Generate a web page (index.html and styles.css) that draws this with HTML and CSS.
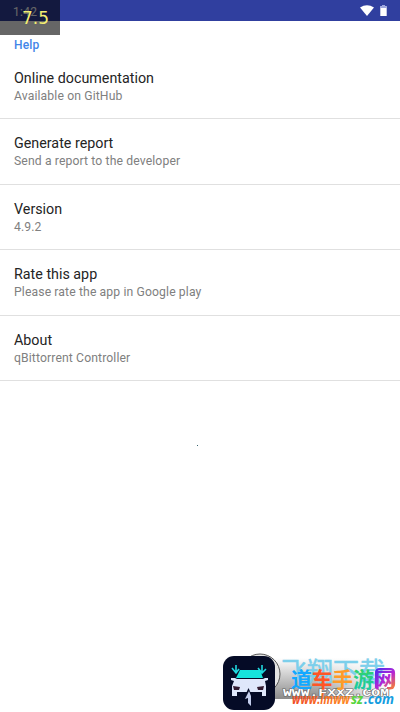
FILE: index.html
```html
<!DOCTYPE html>
<html lang="en">
<head>
<meta charset="utf-8">
<title>Help</title>
<link rel="stylesheet" href="styles.css">
</head>
<body>
<header class="status">
  <span class="clock">1:42</span>
  <svg class="status-icons" width="28" height="12" viewBox="0 0 28 12" fill="#fff">
    <path d="M0 2.500Q7 -2 14 2.500L7 11Z"/>
    <path d="M22 0h3v1.300h1.700V11h-6.400V1.300H22z"/><path fill="#9da7df" d="M22 0h3v1.300h1.700V3h-6.400V1.300H22z"/>
  </svg>
</header>
<div class="meter">7.5</div>
<main>
  <h1 class="heading">Help</h1>
  <section class="item"><h2>Online documentation</h2><p>Available on GitHub</p></section>
  <section class="item"><h2>Generate report</h2><p>Send a report to the developer</p></section>
  <section class="item"><h2>Version</h2><p>4.9.2</p></section>
  <section class="item"><h2>Rate this app</h2><p>Please rate the app in Google play</p></section>
  <section class="item"><h2>About</h2><p>qBittorrent Controller</p></section>
</main>
<i class="dot"></i>
<svg class="watermark" width="185" height="67" viewBox="215 645 185 67">
  <defs>
    <linearGradient id="shade" x2="0" y2="1"><stop offset="0" stop-color="#fff"/><stop offset="1" stop-color="#8b8b8b"/></linearGradient>
    <linearGradient id="fade"><stop offset="0" stop-color="#fff" stop-opacity="0"/><stop offset="1" stop-color="#fff"/></linearGradient>
    <linearGradient id="net" gradientUnits="userSpaceOnUse" x1="375" y1="668" x2="395" y2="689"><stop offset="0" stop-color="#4030f0"/><stop offset=".55" stop-color="#b525d5"/><stop offset="1" stop-color="#ff8b20"/></linearGradient>
    <linearGradient id="swim" x2="0" y2="1"><stop offset="0" stop-color="#36d45a"/><stop offset="1" stop-color="#18c8b0"/></linearGradient>
    <linearGradient id="warm"><stop offset="0" stop-color="#f04a25"/><stop offset="1" stop-color="#ff8a20"/></linearGradient>
  </defs>
  <path fill="url(#shade)" d="M262 658H388V699H262z"/>
  <path fill="url(#fade)" d="M320 655H389V700H320z"/>
  <circle cx="260" cy="674" r="20" fill="#e4e4e4" stroke="#555" stroke-width="1"/>
  <text class="cn back" x="281" y="682" textLength="104" lengthAdjust="spacingAndGlyphs">飞翔下载</text>
  <text class="site" x="283" y="696" textLength="106" lengthAdjust="spacingAndGlyphs">WWW.FXXZ.COM</text>
  <g class="cn front">
    <text x="291" y="687" fill="#12a8ff">道</text>
    <text x="311.500" y="687" fill="#ff5626">车</text>
    <text x="332" y="687" fill="#ff9b28">手</text>
    <text x="353" y="687" fill="url(#swim)">游</text>
    <text x="374.500" y="687" fill="url(#net)">网</text>
  </g>
  <path fill="none" stroke="url(#net)" stroke-width="2.200" d="M376 688V673q0-4 4-4H390q4 0 4 4V684q0 4-4 4h-3"/>
  <g class="url">
    <text x="292" y="704" textLength="58" lengthAdjust="spacingAndGlyphs" fill="url(#warm)">www.lmww</text>
    <text x="351" y="704" textLength="12" lengthAdjust="spacingAndGlyphs" fill="#58d53d">sz</text>
    <text x="364" y="704" textLength="30" lengthAdjust="spacingAndGlyphs" fill="#149de0">.com</text>
  </g>
  <rect x="223" y="656" width="52" height="54" rx="11" fill="#050b26"/>
  <g fill="none" stroke="#20d8df" stroke-width="1.600"><path d="M236 665v7M232 668l4 5 3-4M262 665v7M258 668l4 5 4-4"/></g>
  <path fill="#17e4dc" d="M240 670H260L263 678H236z"/>
  <path fill="#dfe7fb" d="M231 678h4l2 1h26l2-1h3v2l-3 1 1 5v10h-4v-4H237v4h-5v-10l2-5-3-1z"/>
  <path fill="#341c31" d="M233 686l7 1-1 3h-5zM264 686l-7 1 1 3h5z"/>
  <path fill="#050b26" d="M248.500 688l-5 11h10z"/>
  <path fill="#c3cdec" d="M249 691l-4 8 3-1v5l3 3V696z"/>
</svg>
</body>
</html>
```
FILE: styles.css
```css
* { box-sizing: border-box; }
body {
  position: relative;
  width: 400px;
  height: 712px;
  margin: 0;
  overflow: hidden;
  background: #fff;
  font-family: Roboto, "Noto Sans", sans-serif;
}
.status {
  display: flex;
  justify-content: space-between;
  height: 21px;
  padding: 5px 12px 0 13px;
  background: #303f9f;
  color: #fff;
}
.clock { font-size: 12px; line-height: 14px; letter-spacing: .3px; }
.meter {
  position: absolute;
  left: 0;
  top: 0;
  width: 60px;
  height: 35px;
  padding: 8px 0 0 22px;
  background: rgba(0, 0, 0, .6);
  color: #f3ee72;
  font: 17px/21px "DejaVu Sans", sans-serif;
}
.heading {
  height: 33px;
  margin: 0;
  padding: 16px 14px 0;
  color: #4285e8;
  font-size: 12px;
  font-weight: 500;
  line-height: 16px;
  letter-spacing: .2px;
}
.item {
  height: 65.400px;
  padding: 15px 14px 0;
  border-bottom: 1px solid #e0e0e0;
}
.item h2 {
  margin: 0;
  color: #242424;
  font-size: 14.300px;
  font-weight: 400;
  line-height: 18px;
}
.item p {
  margin: 1px 0 0;
  color: #808080;
  font-size: 12.200px;
  line-height: 16px;
  letter-spacing: .12px;
}
.dot {
  position: absolute;
  left: 197px;
  top: 445px;
  width: 1px;
  height: 1px;
  background: #37646e;
}
.watermark { position: absolute; right: 0; bottom: 0; }
.cn { font-family: "Noto Sans CJK SC", sans-serif; font-weight: 700; }
.back { font-size: 27px; font-weight: 400; fill: #7ccfeb; stroke: #7ccfeb; stroke-width: .5px; }
.front { font-size: 21px; }
.site {
  font: 700 10px "Liberation Mono", monospace;
  fill: #fff;
  stroke: #666;
  stroke-width: 1px;
  paint-order: stroke;
}
.url { font: italic 700 15px "Open Sans", sans-serif; }
```
